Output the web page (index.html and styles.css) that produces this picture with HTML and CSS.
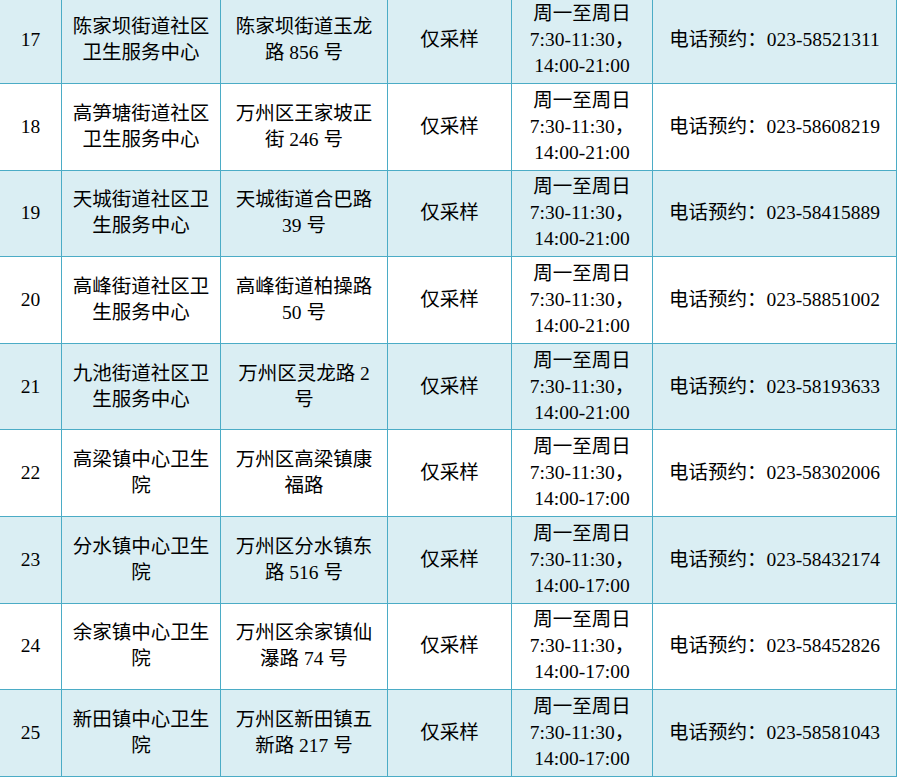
FILE: index.html
```html
<!DOCTYPE html>
<html lang="zh-CN">
<head>
<meta charset="utf-8">
<title>核酸采样点</title>
<link rel="stylesheet" href="styles.css">
</head>
<body>
<table class="sites">
  <colgroup>
    <col class="c-no">
    <col class="c-name">
    <col class="c-addr">
    <col class="c-type">
    <col class="c-time">
    <col class="c-tel">
  </colgroup>
  <tbody>
    <tr class="shade">
      <td>17</td>
      <td>陈家坝街道社区卫生服务中心</td>
      <td>陈家坝街道玉龙路 856 号</td>
      <td>仅采样</td>
      <td>周一至周日<br>7:30-11:30，<br>14:00-21:00</td>
      <td>电话预约：023-58521311</td>
    </tr>
    <tr>
      <td>18</td>
      <td>高笋塘街道社区卫生服务中心</td>
      <td>万州区王家坡正街 246 号</td>
      <td>仅采样</td>
      <td>周一至周日<br>7:30-11:30，<br>14:00-21:00</td>
      <td>电话预约：023-58608219</td>
    </tr>
    <tr class="shade">
      <td>19</td>
      <td>天城街道社区卫生服务中心</td>
      <td>天城街道合巴路 39 号</td>
      <td>仅采样</td>
      <td>周一至周日<br>7:30-11:30，<br>14:00-21:00</td>
      <td>电话预约：023-58415889</td>
    </tr>
    <tr>
      <td>20</td>
      <td>高峰街道社区卫生服务中心</td>
      <td>高峰街道柏操路 50 号</td>
      <td>仅采样</td>
      <td>周一至周日<br>7:30-11:30，<br>14:00-21:00</td>
      <td>电话预约：023-58851002</td>
    </tr>
    <tr class="shade">
      <td>21</td>
      <td>九池街道社区卫生服务中心</td>
      <td>万州区灵龙路 2 号</td>
      <td>仅采样</td>
      <td>周一至周日<br>7:30-11:30，<br>14:00-21:00</td>
      <td>电话预约：023-58193633</td>
    </tr>
    <tr>
      <td>22</td>
      <td>高梁镇中心卫生院</td>
      <td>万州区高梁镇康福路</td>
      <td>仅采样</td>
      <td>周一至周日<br>7:30-11:30，<br>14:00-17:00</td>
      <td>电话预约：023-58302006</td>
    </tr>
    <tr class="shade">
      <td>23</td>
      <td>分水镇中心卫生院</td>
      <td>万州区分水镇东路 516 号</td>
      <td>仅采样</td>
      <td>周一至周日<br>7:30-11:30，<br>14:00-17:00</td>
      <td>电话预约：023-58432174</td>
    </tr>
    <tr>
      <td>24</td>
      <td>余家镇中心卫生院</td>
      <td>万州区余家镇仙瀑路 74 号</td>
      <td>仅采样</td>
      <td>周一至周日<br>7:30-11:30，<br>14:00-17:00</td>
      <td>电话预约：023-58452826</td>
    </tr>
    <tr class="shade">
      <td>25</td>
      <td>新田镇中心卫生院</td>
      <td>万州区新田镇五新路 217 号</td>
      <td>仅采样</td>
      <td>周一至周日<br>7:30-11:30，<br>14:00-17:00</td>
      <td>电话预约：023-58581043</td>
    </tr>
  </tbody>
</table>
</body>
</html>
```

FILE: styles.css
```css
html, body {
  margin: 0;
  padding: 0;
  background: #ffffff;
  overflow: hidden;
}

.sites {
  border-collapse: collapse;
  table-layout: fixed;
  width: 897px;
  margin-top: -3.5px;
  margin-left: -1px;
  font-family: "Liberation Serif", "Noto Sans CJK SC", serif;
  font-size: 19.5px;
  line-height: 26px;
  color: #000000;
}

.c-no { width: 62px; }
.c-name { width: 159px; }
.c-addr { width: 167px; }
.c-type { width: 124px; }
.c-time { width: 141px; }
.c-tel { width: 244px; }

.sites tr {
  height: 86.6px;
}

.sites td {
  border: 1px solid #4bacc6;
  padding: 0 7px;
  text-align: center;
  vertical-align: middle;
}

.sites tr.shade td {
  background: #daeef3;
}
```
